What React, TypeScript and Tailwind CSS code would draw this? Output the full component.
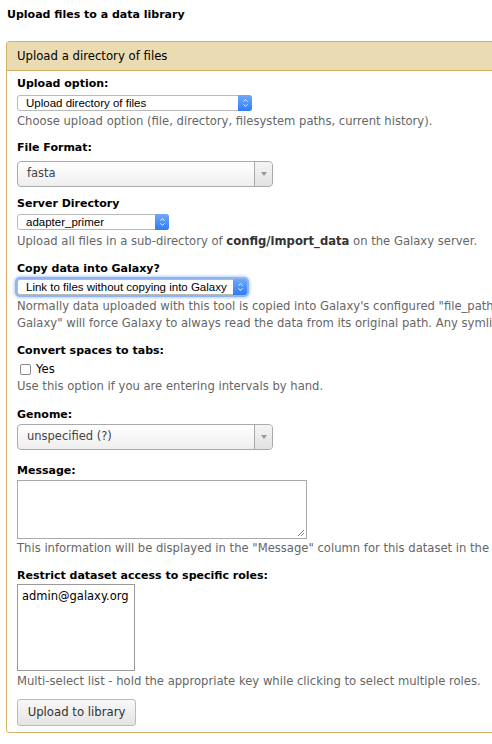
import { ChevronDown, ChevronUp } from 'lucide-react';

function MacSelect({ label, width, focused = false }: { label: string; width: string; focused?: boolean }) {
  return (
    <div
      className={`flex h-[16px] items-stretch rounded-[3px] border border-[#b9b9b9] bg-white ${width} ${
        focused ? 'shadow-[0_0_0_2px_#8fb5f0,0_0_3px_3px_#b7d0f7]' : ''
      }`}
    >
      <span className="flex-1 truncate pl-[8px] font-['Liberation_Sans',sans-serif] text-[11.5px] leading-[14px] text-black">
        {label}
      </span>
      <span className="-my-px -mr-px flex w-[14px] flex-col items-center justify-center rounded-r-[3px] bg-gradient-to-b from-[#6fa9fb] to-[#2f7cf6] text-white">
        <ChevronUp size={7} strokeWidth={3} className="-mb-px" />
        <ChevronDown size={7} strokeWidth={3} className="-mt-px" />
      </span>
    </div>
  );
}

function Select2({ label }: { label: string }) {
  return (
    <div className="flex h-[26px] w-[256px] items-stretch rounded-[4px] border border-[#aaa] bg-gradient-to-b from-white to-[#eeeeee]">
      <span className="flex flex-1 items-center pl-[9px] text-[11.5px] text-[#444]">{label}</span>
      <span className="flex w-[18px] items-center justify-center rounded-r-[4px] border-l border-[#aaa] bg-gradient-to-b from-[#f4f4f4] to-[#e2e2e2]">
        <span className="h-0 w-0 border-x-[3px] border-t-[4px] border-x-transparent border-t-[#999]" />
      </span>
    </div>
  );
}

function Label({ children }: { children: React.ReactNode }) {
  return <div className="text-[11px] font-bold leading-[16px] text-black">{children}</div>;
}

function Help({ children, className = '' }: { children: React.ReactNode; className?: string }) {
  return <div className={`whitespace-nowrap text-[11.6px] leading-[17px] text-[#666] ${className}`}>{children}</div>;
}

export default function App() {
  return (
    <div className="h-[744px] w-[492px] overflow-hidden bg-white font-['DejaVu_Sans',sans-serif] text-[#333]">
      <h2 className="px-[7px] pt-[7px] text-[11px] font-bold leading-[16px] text-black">
        Upload files to a data library
      </h2>

      <div className="ml-[6px] mt-[18px] w-[640px] rounded-[3px] border border-[#d6b161]">
        <div className="h-[29px] border-b border-[#d6b161] bg-[#ebdbb2] px-[10px] text-[11.7px] leading-[28px] text-black">
          Upload a directory of files
        </div>

        <div className="flex flex-col px-[10px] pb-[6px] pt-[5px]">
          <div className="flex flex-col">
            <Label>Upload option:</Label>
            <div className="mt-[3px]">
              <MacSelect label="Upload directory of files" width="w-[235px]" />
            </div>
            <Help className="mt-[2px]">Choose upload option (file, directory, filesystem paths, current history).</Help>
          </div>

          <div className="mt-[10px] flex flex-col">
            <Label>File Format:</Label>
            <div className="mt-[5px]">
              <Select2 label="fasta" />
            </div>
          </div>

          <div className="mt-[9px] flex flex-col">
            <Label>Server Directory</Label>
            <div className="mt-[2px]">
              <MacSelect label="adapter_primer" width="w-[152px]" />
            </div>
            <Help className="mt-[3px]">
              Upload all files in a sub-directory of <b className="text-[#333]">config/import_data</b> on the Galaxy
              server.
            </Help>
          </div>

          <div className="mt-[11px] flex flex-col">
            <Label>Copy data into Galaxy?</Label>
            <div className="mt-[2px]">
              <MacSelect label="Link to files without copying into Galaxy" width="w-[230px]" focused />
            </div>
            <Help className="mt-[3px]">
              Normally data uploaded with this tool is copied into Galaxy's configured "file_path" location where
              Galaxy
              <br />
              Galaxy" will force Galaxy to always read the data from its original path. Any symlinks will be
              dereferenced.
            </Help>
          </div>

          <div className="mt-[11px] flex flex-col">
            <Label>Convert spaces to tabs:</Label>
            <label className="mt-[2px] flex items-center gap-[5px] pl-[3px] text-[11.6px] leading-[16px] text-black">
              <span className="h-[11px] w-[11px] rounded-[2px] border border-[#8a8a8a] bg-white" />
              Yes
            </label>
            <Help className="mt-px">Use this option if you are entering intervals by hand.</Help>
          </div>

          <div className="mt-[12px] flex flex-col">
            <Label>Genome:</Label>
            <div className="mt-px">
              <Select2 label="unspecified (?)" />
            </div>
          </div>

          <div className="mt-[13px] flex flex-col">
            <Label>Message:</Label>
            <div className="relative mt-px h-[59px] w-[290px] border border-[#a9a9a9] bg-white">
              <svg className="absolute bottom-px right-px" width="8" height="8" viewBox="0 0 8 8">
                <path d="M7 1L1 7M7 4L4 7" stroke="#888" strokeWidth="1" />
              </svg>
            </div>
            <Help className="mt-px">
              This information will be displayed in the "Message" column for this dataset in the library browser
            </Help>
          </div>

          <div className="mt-[11px] flex flex-col">
            <Label>Restrict dataset access to specific roles:</Label>
            <div className="h-[87px] w-[118px] border border-[#999] bg-white px-[4px] pt-[4px] text-[11.5px] leading-[15px] text-black">
              admin@galaxy.org
            </div>
            <Help className="mt-[2px]">Multi-select list - hold the appropriate key while clicking to select multiple roles.</Help>
          </div>

          <div className="mt-[9px]">
            <button className="h-[27px] w-[119px] rounded-[3px] border border-[#bbb] bg-gradient-to-b from-[#f8f8f8] to-[#e4e4e4] text-[11.7px] text-[#333]">
              Upload to library
            </button>
          </div>
        </div>
      </div>
    </div>
  );
}
